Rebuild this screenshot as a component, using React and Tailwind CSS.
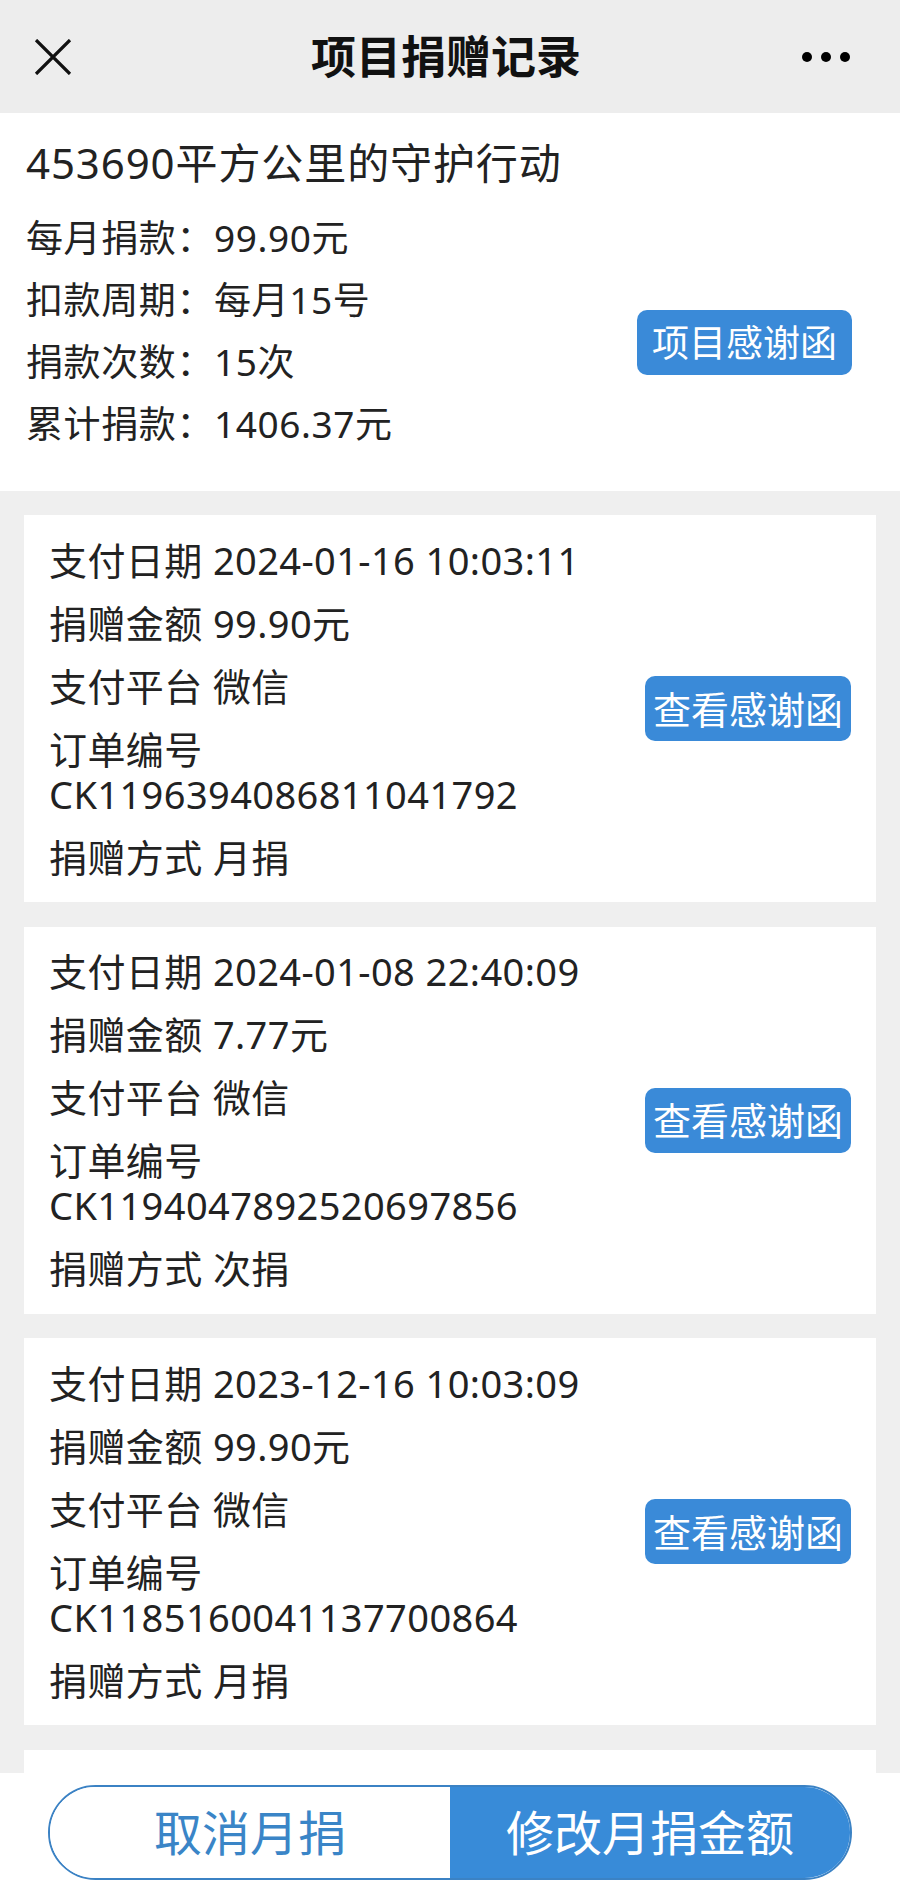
const records = [
  { date: '2024-01-16 10:03:11', amount: '99.90元', platform: '微信', order: 'CK1196394086811041792', type: '月捐' },
  { date: '2024-01-08 22:40:09', amount: '7.77元', platform: '微信', order: 'CK1194047892520697856', type: '次捐' },
  { date: '2023-12-16 10:03:09', amount: '99.90元', platform: '微信', order: 'CK1185160041137700864', type: '月捐' },
];

const font = { fontFamily: '"Noto Sans", "Noto Sans CJK SC", sans-serif' };

function Header() {
  return (
    <div className="grid h-[113px] shrink-0 grid-cols-[1fr_auto_1fr] items-center bg-[#ededed] pl-[34px] pr-[50px]">
      <svg width="38" height="36" viewBox="0 0 38 36" className="text-[#111]">
        <path d="M2 1 L36 35 M36 1 L2 35" stroke="currentColor" strokeWidth="3.2" fill="none" />
      </svg>
      <div className="ml-[8px] text-[45px] font-bold leading-none text-[#111]">项目捐赠记录</div>
      <div className="flex items-center justify-end gap-[9px]">
        <span className="h-[10px] w-[10px] rounded-full bg-black"></span>
        <span className="h-[10px] w-[10px] rounded-full bg-black"></span>
        <span className="h-[10px] w-[10px] rounded-full bg-black"></span>
      </div>
    </div>
  );
}

function Summary() {
  return (
    <div className="shrink-0 bg-white pb-[36px] pl-[26px] pr-[48px] pt-[22px] text-[#222]">
      <div className="text-[42px] leading-[56px] tracking-[0.9px]">453690平方公里的守护行动</div>
      <div className="mt-[16px] flex items-start justify-between">
        <div className="text-[37px] leading-[62px] tracking-[0.6px]">
          <div>每月捐款：99.90元</div>
          <div>扣款周期：每月15号</div>
          <div>捐款次数：15次</div>
          <div>累计捐款：1406.37元</div>
        </div>
        <button className="mt-[103px] h-[65px] rounded-[10px] bg-[#3a8ad8] px-[15px] text-[37px] leading-none text-white">
          项目感谢函
        </button>
      </div>
    </div>
  );
}

function RecordCard({ r }) {
  return (
    <div className="flex h-[387px] shrink-0 items-center justify-between bg-white pl-[25px] pr-[25px]">
      <div className="flex flex-col gap-[18px] text-[38px] leading-[45px] tracking-[0.4px] text-[#222]">
        <div>支付日期 {r.date}</div>
        <div>捐赠金额 {r.amount}</div>
        <div>支付平台 {r.platform}</div>
        <div>
          <div>订单编号</div>
          <div>{r.order}</div>
        </div>
        <div>捐赠方式 {r.type}</div>
      </div>
      <button className="h-[65px] rounded-[10px] bg-[#3a8ad8] px-[8px] text-[38px] leading-none text-white">
        查看感谢函
      </button>
    </div>
  );
}

export default function App() {
  return (
    <div className="flex h-[1891px] w-[900px] flex-col overflow-hidden bg-[#efefef]" style={font}>
      <Header />
      <Summary />
      <div className="flex min-h-0 flex-1 flex-col gap-[24.5px] overflow-hidden px-[24px] pt-[24px]">
        {records.map((r) => (
          <RecordCard key={r.order} r={r} />
        ))}
        {/* next record, scrolled under the bottom bar */}
        <div className="h-[387px] shrink-0 bg-white"></div>
      </div>
      <div className="flex h-[118px] shrink-0 bg-white px-[48px] pb-[11px] pt-[12px]">
        <div className="flex h-[95px] w-full overflow-hidden rounded-full border-2 border-[#3b82c4]">
          <button className="flex flex-1 items-center justify-center bg-white text-[48px] leading-none text-[#3a85c7]">
            取消月捐
          </button>
          <button className="flex flex-1 items-center justify-center bg-[#388bd8] text-[48px] leading-none text-white">
            修改月捐金额
          </button>
        </div>
      </div>
    </div>
  );
}
